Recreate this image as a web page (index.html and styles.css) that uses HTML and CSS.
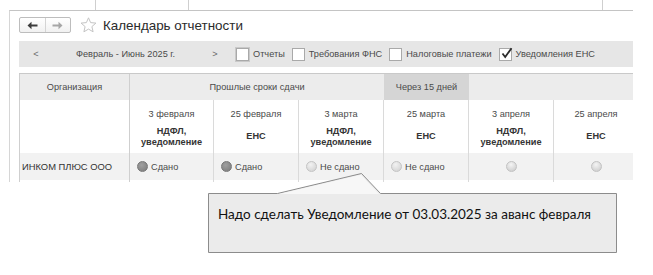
FILE: index.html
```html
<!DOCTYPE html>
<html lang="ru">
<head>
    <meta charset="UTF-8">
    <title>Календарь отчетности</title>
    <link rel="stylesheet" href="styles.css">
</head>
<body>

    <!-- Tabs of the window above -->
    <div class="tabs">
        <span class="tab tab-1"></span>
        <span class="tab tab-2"></span>
        <span class="tab tab-3"></span>
    </div>

    <div class="frame">
        <!-- Title bar -->
        <div class="head">
            <div class="nav">
                <span class="nav-btn nav-back">
                    <svg width="11" height="9" viewBox="0 0 11 9"><path d="M0.5 4.5 L4.5 0.8 L4.5 3.6 L10.5 3.6 L10.5 5.4 L4.5 5.4 L4.5 8.2 Z" fill="#3c3c3c"/></svg>
                </span>
                <span class="nav-btn nav-forward">
                    <svg width="11" height="9" viewBox="0 0 11 9"><path d="M10.5 4.5 L6.5 0.8 L6.5 3.6 L0.5 3.6 L0.5 5.4 L6.5 5.4 L6.5 8.2 Z" fill="#a6a6a6"/></svg>
                </span>
            </div>
            <svg class="star" width="17" height="16" viewBox="0 0 17 16">
                <polygon points="8.5,0.8 10.6,5.6 15.9,6.1 11.9,9.6 13.1,14.8 8.5,12.1 3.9,14.8 5.1,9.6 1.1,6.1 6.4,5.6" fill="#fff" stroke="#c4c4c4" stroke-width="1"/>
            </svg>
            <h1 class="title">Календарь отчетности</h1>
        </div>

        <!-- Period and filters -->
        <div class="toolbar">
            <div class="period">
                <span class="period-btn">&lt;</span>
                <span class="period-label">Февраль - Июнь 2025 г.</span>
                <span class="period-btn">&gt;</span>
            </div>
            <div class="filters">
                <label class="filter"><span class="check focused"></span>Отчеты</label>
                <label class="filter"><span class="check"></span>Требования ФНС</label>
                <label class="filter"><span class="check"></span>Налоговые платежи</label>
                <label class="filter">
                    <span class="check">
                        <svg width="13" height="13" viewBox="0 0 13 13"><path d="M2.5 6.5 L5.2 10 L11.5 1.2" fill="none" stroke="#2b2b2b" stroke-width="1.8"/></svg>
                    </span>Уведомления ЕНС
                </label>
            </div>
        </div>

        <!-- Calendar grid -->
        <div class="calendar">
            <div class="cell head-cell first">Организация</div>
            <div class="cell head-cell span-3">Прошлые сроки сдачи</div>
            <div class="cell head-cell soon">Через 15 дней</div>
            <div class="cell head-cell span-2"></div>

            <div class="cell first"></div>
            <div class="cell date">3 февраля</div>
            <div class="cell date">25 февраля</div>
            <div class="cell date">3 марта</div>
            <div class="cell date">25 марта</div>
            <div class="cell date">3 апреля</div>
            <div class="cell date">25 апреля</div>

            <div class="cell first"></div>
            <div class="cell kind">НДФЛ,<br>уведомление</div>
            <div class="cell kind">ЕНС</div>
            <div class="cell kind">НДФЛ,<br>уведомление</div>
            <div class="cell kind">ЕНС</div>
            <div class="cell kind">НДФЛ,<br>уведомление</div>
            <div class="cell kind">ЕНС</div>

            <div class="cell first status org">ИНКОМ ПЛЮС ООО</div>
            <div class="cell status"><span class="dot done"></span>Сдано</div>
            <div class="cell status"><span class="dot done"></span>Сдано</div>
            <div class="cell status"><span class="dot pending"></span>Не сдано</div>
            <div class="cell status"><span class="dot pending"></span>Не сдано</div>
            <div class="cell status center"><span class="dot future"></span></div>
            <div class="cell status center"><span class="dot future"></span></div>

            <div class="cell first rest"></div>
            <div class="cell rest"></div>
            <div class="cell rest"></div>
            <div class="cell rest"></div>
            <div class="cell rest"></div>
            <div class="cell rest"></div>
            <div class="cell rest"></div>
        </div>
    </div>

    <!-- Note callout -->
    <div class="callout">
        <svg class="callout-shape" width="420" height="90" viewBox="0 0 420 90">
            <path d="M3.5 23.5 L72.5 23.5 L156.5 3.5 L175.5 23.5 L411.5 23.5 L411.5 82.5 L3.5 82.5 Z" fill="#ebebeb" stroke="#8c8c8c" stroke-width="1"/>
            <path d="M74 24 L156 4.8 L174 24 Z" fill="#f7f7f7"/>
        </svg>
        <p class="callout-text">Надо сделать Уведомление от 03.03.2025 за аванс февраля</p>
    </div>

</body>
</html>
```

FILE: styles.css
```css
body {
    margin: 0;
    background-color: #fff;
    font-family: "Liberation Sans", Arial, sans-serif;
    color: #4a4a4a;
    position: relative;
    width: 653px;
    height: 275px;
    overflow: hidden;
}

.tabs {
    display: flex;
    height: 10px;
    padding-left: 9px;
}

.tab {
    border-right: 1px solid #cfcfcf;
}

.tab-1 {
    width: 86px;
}

.tab-2 {
    width: 92px;
}

.tab-3 {
    width: 413px;
}

.frame {
    margin-left: 9px;
    width: 614px;
    height: 171px;
    padding-left: 9px;
    border-top: 1px solid #c4c4c4;
    border-left: 1px solid #d6d6d6;
    overflow: hidden;
}

/* Title bar */

.head {
    display: flex;
    align-items: center;
    height: 16px;
    margin-top: 6px;
}

.nav {
    display: flex;
    width: 52px;
    height: 16px;
    box-sizing: border-box;
    border: 1px solid #bdbdbd;
    border-radius: 2px;
    background: linear-gradient(#ffffff, #f1f1f1);
}

.nav-btn {
    flex: 1;
    display: flex;
    align-items: center;
    justify-content: center;
}

.nav-back {
    border-right: 1px solid #d4d4d4;
}

.star {
    margin-left: 9px;
}

.title {
    margin: 0 0 0 6px;
    font-size: 13.4px;
    font-weight: normal;
    color: #2b2b2b;
}

/* Toolbar */

.toolbar {
    display: flex;
    align-items: center;
    height: 26px;
    margin-top: 8px;
    background-color: #e6e6e6;
    font-size: 9.2px;
}

.period {
    display: flex;
    align-items: center;
}

.period-btn {
    width: 34px;
    text-align: center;
    color: #6a6a6a;
}

.period-label {
    width: 145px;
    text-align: center;
}

.filters {
    display: flex;
    align-items: center;
    gap: 7px;
    margin-left: 4px;
}

.filter {
    display: flex;
    align-items: center;
    gap: 4px;
}

.check {
    width: 13px;
    height: 13px;
    box-sizing: border-box;
    border: 1px solid #a9a9a9;
    background-color: #fff;
    position: relative;
}

.check.focused {
    box-shadow: 0 0 0 1px #c9c9c9;
}

.check svg {
    position: absolute;
    left: 0;
    top: -2px;
}

/* Calendar grid */

.calendar {
    display: grid;
    grid-template-columns: 111px 84px repeat(5, 85px);
    margin-top: 6px;
    border-top: 1px solid #c9c9c9;
    font-size: 9.2px;
}

.cell {
    box-sizing: border-box;
    border-right: 1px solid #dadada;
    text-align: center;
}

.first {
    border-left: 1px solid #cfcfcf;
    border-right-color: #cfcfcf;
}

.head-cell {
    height: 26px;
    line-height: 26px;
    background-color: #ececec;
    border-right: none;
}

.head-cell.first {
    border-right: 1px solid #cfcfcf;
}

.span-3 {
    grid-column: span 3;
}

.span-2 {
    grid-column: span 2;
}

.soon {
    background-color: #d5d5d5;
}

.date {
    height: 25px;
    padding-top: 8px;
    line-height: 12px;
}

.kind {
    display: flex;
    flex-direction: column;
    justify-content: center;
    height: 28px;
    padding-bottom: 5px;
    line-height: 11px;
    font-weight: bold;
    color: #353535;
}

.status {
    display: flex;
    align-items: center;
    gap: 3px;
    height: 27px;
    padding-left: 7px;
    background-color: #f2f2f2;
    text-align: left;
}

.status.center {
    justify-content: center;
    padding-left: 0;
}

.org {
    padding-left: 2px;
    color: #333;
    font-size: 9.4px;
}

.rest {
    height: 12px;
}

.dot {
    width: 11px;
    height: 11px;
    border-radius: 50%;
    box-sizing: border-box;
}

.done {
    background: radial-gradient(circle at 40% 35%, #a0a0a0, #7a7a7a);
    border: 1px solid #777;
}

.pending {
    background: radial-gradient(circle at 40% 30%, #f2f2f2, #cfcfcf);
    border: 1px solid #c4c4c4;
}

.future {
    background: radial-gradient(circle at 45% 30%, #f4f4f4, #c8c8c8);
    border: 1px solid #c2c2c2;
}

/* Note callout */

.callout {
    position: absolute;
    left: 205px;
    top: 170px;
    width: 420px;
    height: 90px;
}

.callout-shape {
    position: absolute;
    left: 0;
    top: 0;
}

.callout-text {
    position: relative;
    margin: 0;
    padding: 36px 0 0 13px;
    font-family: Lato, "Open Sans", sans-serif;
    font-size: 13.5px;
    color: #111;
}
```
